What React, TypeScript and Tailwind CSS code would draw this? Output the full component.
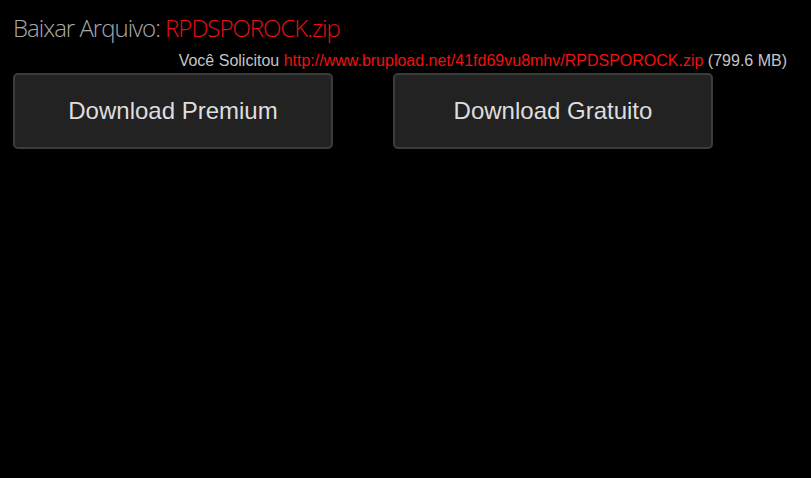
export default function App() {
  return (
    <div className="min-h-[478px] w-full bg-black px-[13px] pt-[12px]">
      {/* Título */}
      <h1 className="font-['Open_Sans',sans-serif] text-[24px] font-light leading-[32px] tracking-[-1px] text-[#a8a8a8]">
        Baixar Arquivo: <span className="text-[#e81010]">RPDSPOROCK.zip</span>
      </h1>

      {/* Linha de solicitação */}
      <p className="mr-[11px] mt-[8px] text-right font-['Liberation_Sans',Arial,sans-serif] text-[16px] leading-[18px] text-[#c4c4c4]">
        Você Solicitou{" "}
        <a className="text-[#f01010]" href="#">
          http://www.brupload.net/41fd69vu8mhv/RPDSPOROCK.zip
        </a>{" "}
        (799.6 MB)
      </p>

      {/* Botões */}
      <div className="mt-[3px] flex gap-[60px]">
        <button className="h-[76px] w-[320px] rounded-[5px] border-2 border-[#3c3c3c] bg-[#222222] font-['Liberation_Sans',Arial,sans-serif] text-[24px] text-[#dedede]">
          Download Premium
        </button>
        <button className="h-[76px] w-[320px] rounded-[5px] border-2 border-[#3c3c3c] bg-[#222222] font-['Liberation_Sans',Arial,sans-serif] text-[24px] text-[#dedede]">
          Download Gratuito
        </button>
      </div>
    </div>
  );
}
